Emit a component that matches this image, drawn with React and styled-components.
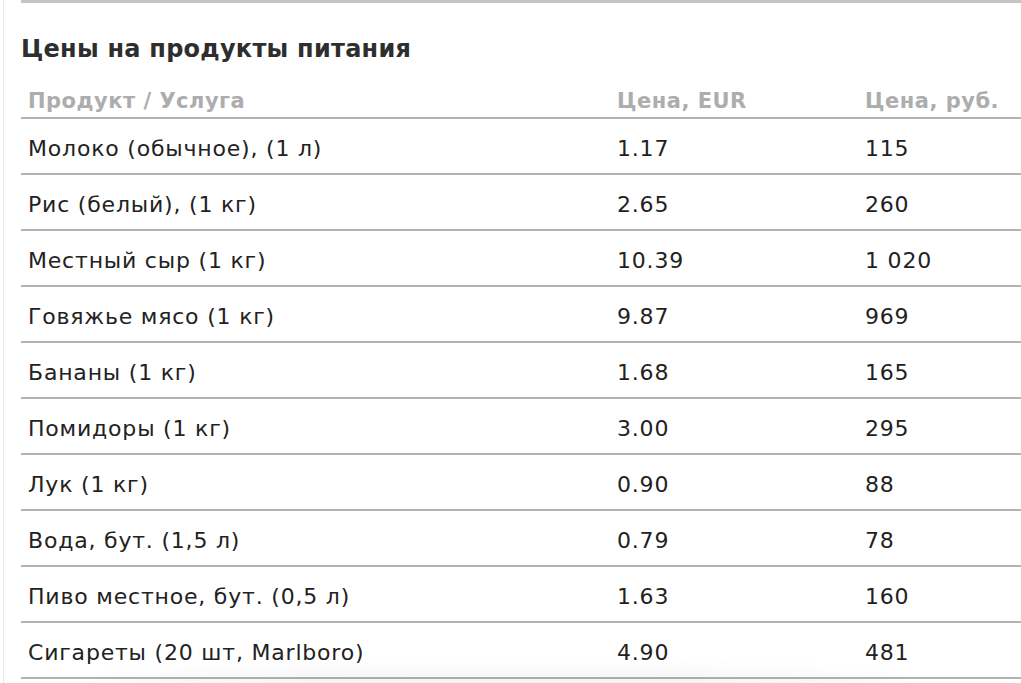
import React from "react";
import styled, { createGlobalStyle } from "styled-components";

const Global = createGlobalStyle`
  html, body { margin: 0; padding: 0; background: #fff; }
  body { font-family: "DejaVu Sans", Verdana, sans-serif; overflow: hidden; }
`;

const Page = styled.div`
  position: relative;
  height: 683px;
  overflow: hidden;
  padding-left: 3px;
`;

const Frame = styled.div`
  border-left: 1px dotted #d4d4d4;
  padding-left: 17px;
  height: 100%;
`;

const TopRule = styled.div`
  height: 3px;
  background: #c4c4c4;
`;

const Title = styled.h2`
  margin: 30px 0 0 0;
  font-size: 24px;
  font-weight: bold;
  letter-spacing: 0.25px;
  color: #2e2e2e;
  line-height: 32px;
`;

const Table = styled.div`
  display: grid;
  grid-template-columns: 589px 248px 1fr;
  margin-top: 9px;
`;

const HeadCell = styled.div`
  padding: 0 7px 4px;
  height: 45px;
  box-sizing: border-box;
  display: flex;
  align-items: flex-end;
  color: #adadad;
  font-weight: bold;
  font-size: 21px;
  letter-spacing: 0.5px;
  border-bottom: 2px solid #b2b2b2;
  white-space: nowrap;
`;

const Cell = styled.div`
  padding: 5px 7px 0;
  height: 56px;
  box-sizing: border-box;
  display: flex;
  align-items: center;
  color: #222;
  font-size: 22px;
  letter-spacing: 0.8px;
  border-bottom: 2px solid #b2b2b2;
  white-space: nowrap;
`;

const BottomShade = styled.div`
  position: absolute;
  left: 90px;
  right: 110px;
  bottom: -40px;
  height: 40px;
  box-shadow: 0 -6px 28px rgba(0, 0, 0, 0.07);
  border-radius: 50%;
  pointer-events: none;
`;

const rows = [
  ["Молоко (обычное), (1 л)", "1.17", "115"],
  ["Рис (белый), (1 кг)", "2.65", "260"],
  ["Местный сыр (1 кг)", "10.39", "1 020"],
  ["Говяжье мясо (1 кг)", "9.87", "969"],
  ["Бананы (1 кг)", "1.68", "165"],
  ["Помидоры (1 кг)", "3.00", "295"],
  ["Лук (1 кг)", "0.90", "88"],
  ["Вода, бут. (1,5 л)", "0.79", "78"],
  ["Пиво местное, бут. (0,5 л)", "1.63", "160"],
  ["Сигареты (20 шт, Marlboro)", "4.90", "481"],
];

export default function App() {
  return (
    <>
      <Global />
      <Page>
        <Frame>
          <TopRule />
          <Title>Цены на продукты питания</Title>
          <Table>
            <HeadCell>Продукт / Услуга</HeadCell>
            <HeadCell>Цена, EUR</HeadCell>
            <HeadCell>Цена, руб.</HeadCell>
            {rows.map((r, i) => (
              <React.Fragment key={i}>
                <Cell>{r[0]}</Cell>
                <Cell>{r[1]}</Cell>
                <Cell>{r[2]}</Cell>
              </React.Fragment>
            ))}
          </Table>
        </Frame>
        <BottomShade />
      </Page>
    </>
  );
}
